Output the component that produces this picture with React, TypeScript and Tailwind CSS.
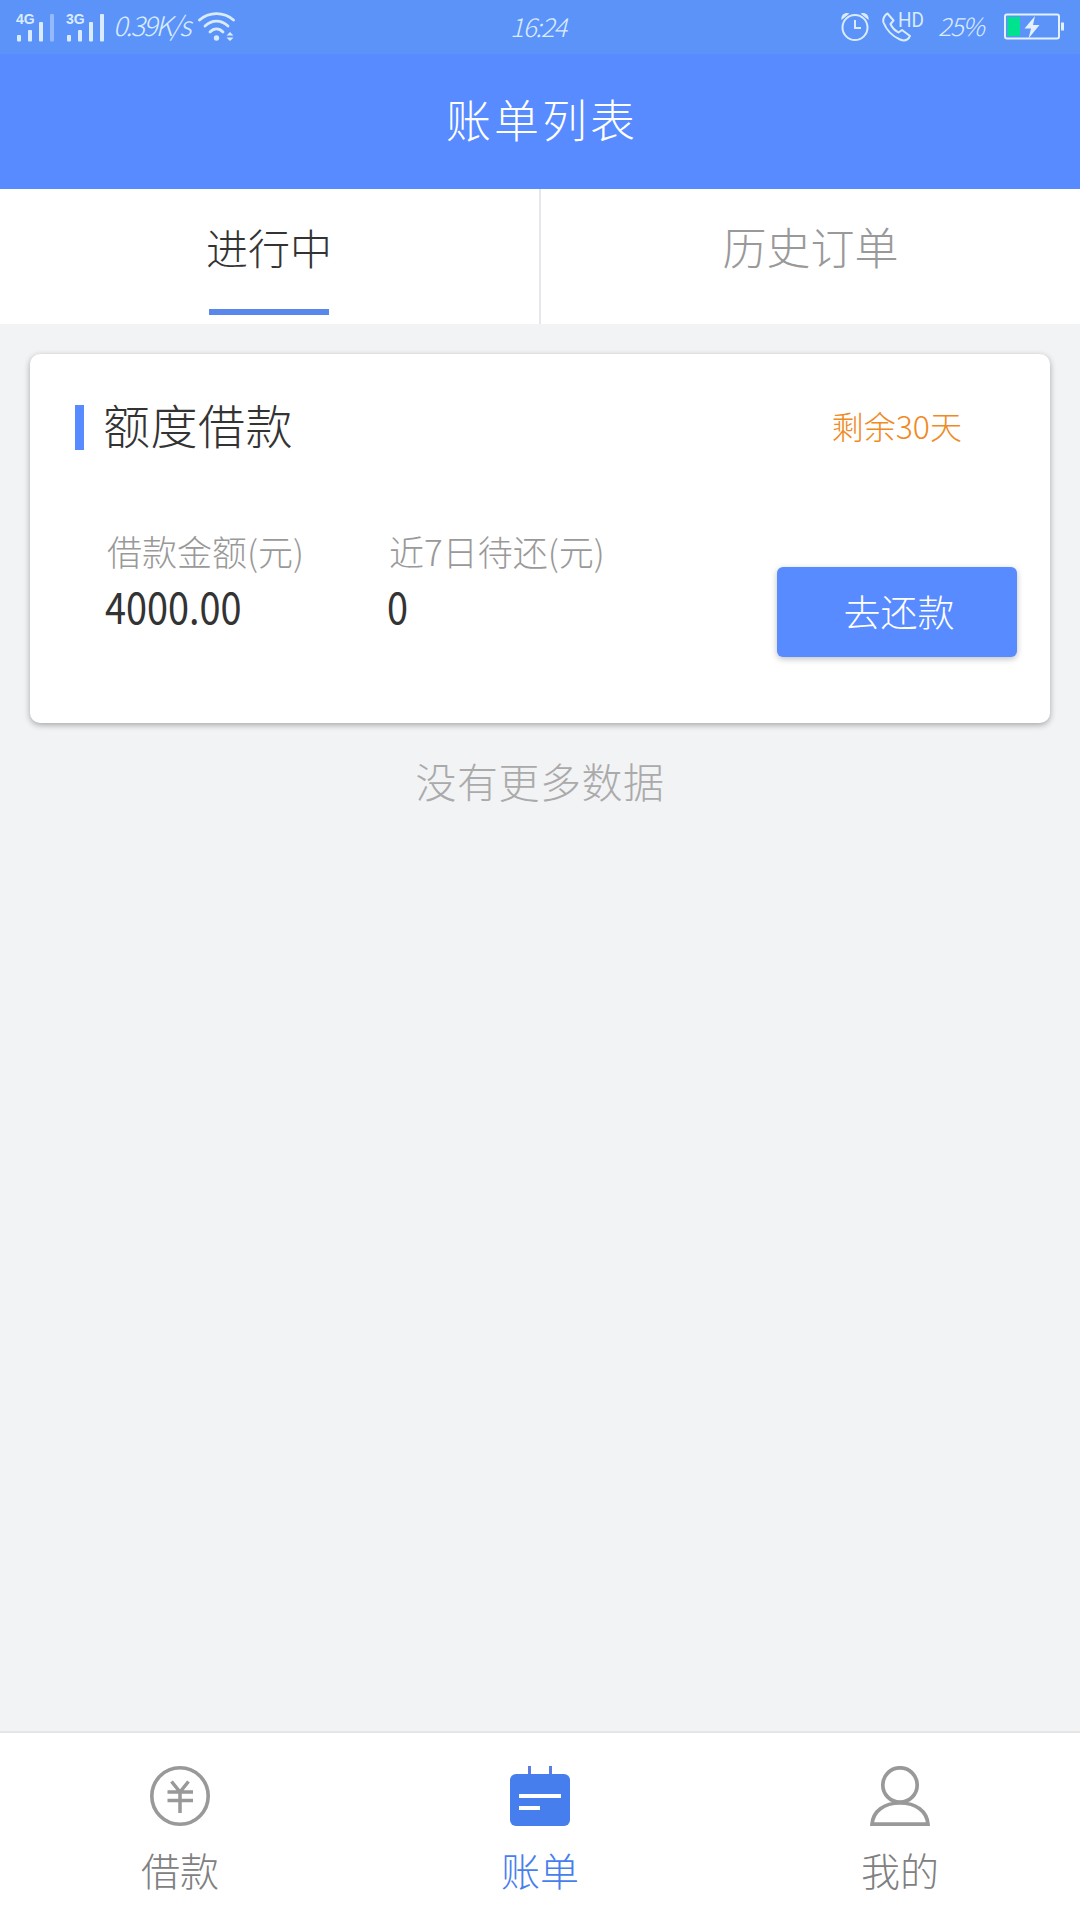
import React, { useState } from "react";

const SignalIcon: React.FC<{ label: string; weak?: boolean }> = ({
  label,
  weak,
}) => (
  <svg width="41" height="36" viewBox="-1 -4 41 36" fill="#d9ecff">
    <text
      x="0"
      y="11"
      fontSize="14"
      fontWeight="700"
      fontFamily="Liberation Sans, Arial, sans-serif"
    >
      {label}
    </text>
    <rect x="1" y="22" width="4" height="6.5" rx="1" />
    <rect x="12" y="17" width="4" height="11.5" rx="1" />
    <rect x="23" y="9" width="4" height="19.5" rx="1" />
    <rect x="34" y="1" width="4" height="27.5" rx="1" opacity={weak ? 0.45 : 1} />
  </svg>
);

const WifiIcon = () => (
  <svg width="38" height="30" viewBox="0 0 38 30" fill="none" stroke="#d9ecff">
    <g strokeWidth="2.8" strokeLinecap="round">
      <path d="M1.5 8C11 -.5 26 -.5 35.5 8" />
      <path d="M7 14C14 7.500 23 7.500 30 14" />
      <path d="M12 20C16 16 21 16 25 20" />
    </g>
    <circle cx="18.5" cy="26" r="2.7" fill="#d9ecff" stroke="none" />
    <path
      d="M28.500 23.500L32 20L35.500 23.500ZM28.500 25.500L32 29L35.500 25.500Z"
      fill="#d9ecff"
      stroke="none"
    />
  </svg>
);

const AlarmIcon = () => (
  <svg width="28" height="30" viewBox="0 0 28 30" fill="none" stroke="#d9ecff">
    <circle cx="14" cy="15.5" r="12.5" strokeWidth="2" />
    <path d="M14 8V16H20" strokeWidth="2" />
    <path
      d="M.5 8C-.5 3 4 -.5 8.500 1.500ZM27.500 8C28.500 3 24 -.5 19.500 1.500Z"
      fill="#d9ecff"
      stroke="none"
    />
  </svg>
);

const PhoneHdIcon = () => (
  <svg width="46" height="38" viewBox="0 -4 46 38">
    <path
      d="M5.500 1.500L11.500 8.500L8.500 12C10 15.500 13 18.500 16.500 20.500L20 18L28 24C26 28 22.500 29.500 18 27.500C10 24 4.500 18 1.500 10.500C.5 7 2.500 3 5.500 1.500Z"
      fill="none"
      stroke="#d9ecff"
      strokeWidth="2"
      strokeLinejoin="round"
    />
    <text
      x="16"
      y="15"
      fontSize="20"
      fontWeight="400"
      textLength="26"
      lengthAdjust="spacingAndGlyphs"
      fill="#d9ecff"
      fontFamily="Roboto, sans-serif"
    >
      HD
    </text>
  </svg>
);

const BatteryIcon = () => (
  <svg width="60" height="28" viewBox="0 0 60 28">
    <rect x="1" y="1.5" width="54" height="24" rx="2" fill="none" stroke="#e3f1ff" strokeWidth="2" />
    <rect x="3.5" y="4" width="12.5" height="19" fill="#00e38e" />
    <rect x="57" y="9.5" width="3" height="8" fill="#e3f1ff" />
    <path d="M31 3L20.500 15.500H27L24.500 25.500L35.500 12H29Z" fill="#e3f1ff" />
  </svg>
);

const LoanIcon = () => (
  <svg width="60" height="60" viewBox="0 0 60 60" fill="none" stroke="#999">
    <circle cx="30" cy="30" r="28.2" strokeWidth="3.6" />
    <path
      d="M21.500 15.500L30 26L38.500 15.500M17.500 26H43M17.500 34.500H43M30 26V47"
      strokeWidth="3.5"
    />
  </svg>
);

const BillIcon = () => (
  <svg width="60" height="60" viewBox="0 0 60 60">
    <path d="M18 0H21V9H18ZM39 0H42V9H39Z" fill="#5a7fe0" />
    <rect y="8" width="60" height="52" rx="6" fill="#477eee" />
    <path d="M9 30H51M9 42H30" stroke="#fff" strokeWidth="4" />
  </svg>
);

const MineIcon = () => (
  <svg width="60" height="60" viewBox="0 0 60 60" fill="none" stroke="#999" strokeWidth="3.7">
    <circle cx="30" cy="19" r="17.2" />
    <path d="M2 58.200C3 45 14 37 30 37S57 45 58 58.200Z" />
  </svg>
);

const tabs = ["进行中", "历史订单"];

const navItems = [
  { label: "借款", icon: <LoanIcon /> },
  { label: "账单", icon: <BillIcon /> },
  { label: "我的", icon: <MineIcon /> },
];

const StatusBar = () => (
  <div className="grid h-[54px] grid-cols-[1fr_auto_1fr] items-center bg-[#5c93f8] text-[#d9ecff]">
    <div className="flex items-center pl-[15px]">
      <SignalIcon label="4G" weak />
      <div className="ml-[9px] flex">
        <SignalIcon label="3G" />
      </div>
      <span className="ml-[7px] w-[85px] pb-1 text-[27px] leading-[36px] tracking-[-1.9px] whitespace-nowrap italic">
        0.39K/s
      </span>
      <WifiIcon />
    </div>
    <span className="pr-1 pb-0.5 text-[26px] leading-[36px] tracking-[-1.2px] italic">
      16:24
    </span>
    <div className="flex items-center justify-end pr-4">
      <AlarmIcon />
      <div className="ml-[13px]">
        <PhoneHdIcon />
      </div>
      <span className="ml-2.5 w-[66px] pb-1 text-[25px] leading-[36px] tracking-[-1.2px] italic">
        25%
      </span>
      <BatteryIcon />
    </div>
  </div>
);

const Amount: React.FC<{ label: string; value: string }> = ({
  label,
  value,
}) => (
  <div className="w-[282px] shrink-0">
    <p className="text-[35px] leading-[50px] whitespace-nowrap text-[#999]">
      {label}
    </p>
    <p className="-ml-0.5 origin-left scale-x-[0.86] text-[44px] leading-[59px] font-normal text-[#333]">
      {value}
    </p>
  </div>
);

export default function App() {
  const [activeTab, setActiveTab] = useState(0);

  return (
    <div className="flex h-[1920px] w-[1080px] flex-col bg-[#f2f3f5] font-['Noto_Sans_CJK_SC',sans-serif] font-light">
      <StatusBar />
      <header className="flex h-[135px] items-center justify-center bg-[#578bff] pb-1.5">
        <h1 className="pl-1 text-[45px] tracking-[3px] text-white">账单列表</h1>
      </header>

      <div className="grid h-[135px] grid-cols-[541px_539px] bg-white">
        {tabs.map((tab, index) => (
          <button
            key={tab}
            onClick={() => setActiveTab(index)}
            className={`flex flex-col items-center ${
              index === 0 ? "border-r-2 border-[#e6e7ea] pr-px" : ""
            } ${activeTab === index ? "text-[#333]" : "text-[#999]"}`}
          >
            <span
              className={`h-[120px] leading-[115px] ${
                index === 0 ? "text-[42px]" : "text-[44px]"
              }`}
            >
              {tab}
            </span>
            {activeTab === index && (
              <span className="h-1.5 w-[120px] bg-[#5a87ec]" />
            )}
          </button>
        ))}
      </div>

      <main className="flex flex-1 flex-col p-[30px]">
        <section className="h-[369px] rounded-[10px] bg-white pt-[45px] pr-[33px] pl-[45px] shadow-[0_2px_6px_rgba(0,0,0,0.32)]">
          <div className="flex h-[56px] items-center justify-between">
            <div className="flex items-center">
              <span className="h-[45px] w-[9px] bg-[#578bff]" />
              <h2 className="ml-[19px] pb-1.5 text-[47px] leading-[50px] tracking-[0.5px] text-[#333]">
                额度借款
              </h2>
            </div>
            <span className="mr-[55px] pb-1 text-[32px] text-[#f08a24]">
              剩余30天
            </span>
          </div>
          <div className="mt-[71px] flex">
            <div className="ml-8 flex w-[540px]">
              <Amount label="借款金额(元)" value="4000.00" />
              <Amount label="近7日待还(元)" value="0" />
            </div>
            <button className="mt-[41px] ml-auto h-[90px] w-60 rounded-md bg-[#578bff] pl-1 text-[37px] text-white shadow-[0_2px_6px_rgba(0,0,0,0.25)]">
              去还款
            </button>
          </div>
        </section>
        <p className="mt-[27px] text-center text-[41px] leading-[60px] tracking-[0.5px] text-[#aaa]">
          没有更多数据
        </p>
      </main>

      <nav className="flex h-[189px] border-t-2 border-[#e6e6e8] bg-white">
        {navItems.map((item) => (
          <button
            key={item.label}
            className={`flex flex-1 flex-col items-center pt-[33px] ${
              item.label === "账单" ? "text-[#477eee]" : "text-[#808080]"
            }`}
          >
            {item.icon}
            <span className="mt-[13px] text-[39px] leading-[60px]">
              {item.label}
            </span>
          </button>
        ))}
      </nav>
    </div>
  );
}
